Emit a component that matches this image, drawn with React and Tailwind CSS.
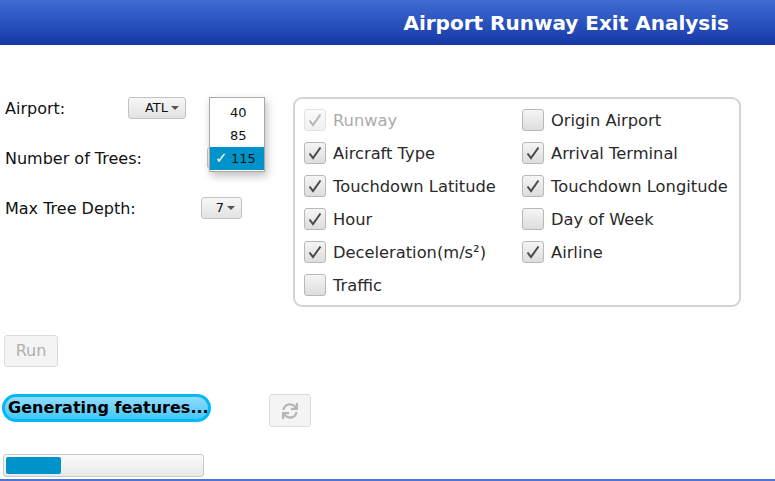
import { FaSync } from 'react-icons/fa';

const font = "font-['DejaVu_Sans',sans-serif]";

function Combo({ value, className }) {
  return (
    <div
      className={`flex h-[22px] items-center justify-end gap-[3px] rounded-[3px] border border-[#c2c2c2] bg-gradient-to-b from-[#f7f7f7] to-[#e2e2e2] pr-[6px] text-[13px] text-[#111] ${className}`}
    >
      {value && <span>{value}</span>}
      <svg width="8" height="5" viewBox="0 0 8 5">
        <path d="M0 0 L8 0 L4 4 Z" fill="#555" />
      </svg>
    </div>
  );
}

function Check({ label, checked, disabled }) {
  return (
    <div className={`flex h-[22px] items-center gap-[7px] ${disabled ? 'opacity-40' : ''}`}>
      <div className="flex h-[22px] w-[22px] shrink-0 items-center justify-center rounded-[3px] border border-[#b8b8b8] bg-gradient-to-b from-[#f5f5f5] to-[#dddddd]">
        {checked && (
          <svg width="16" height="16" viewBox="0 0 16 16">
            <path d="M2.5 8.5 L6 13 L13.5 2.5" fill="none" stroke="#4a4a4a" strokeWidth="2" />
          </svg>
        )}
      </div>
      <span className="relative top-[1px] whitespace-nowrap text-[16.3px] text-[#2a2a2a]">{label}</span>
    </div>
  );
}

export default function App() {
  return (
    <div className={`flex h-[481px] w-[775px] flex-col overflow-hidden bg-white ${font}`}>
      <div className="flex h-[45px] shrink-0 items-center justify-end bg-gradient-to-b from-[#416cd4] to-[#1538a6] pr-[46px]">
        <h1 className="text-[20px] font-bold text-white">Airport Runway Exit Analysis</h1>
      </div>

      <div className="mt-[52px] flex items-start">
        <div className="relative flex w-[293px] flex-col gap-[28px] text-[16px] text-[#111]">
          <div className="flex h-[22px] items-center">
            <span className="relative top-[1px] w-[128px] pl-[5px]">Airport:</span>
            <Combo value="ATL" className="w-[58px]" />
          </div>
          <div className="flex h-[22px] items-center">
            <span className="relative top-[1px] w-[207px] pl-[5px]">Number of Trees:</span>
            <Combo className="w-[56px] border-[#0093c9]" />
          </div>
          <div className="flex h-[22px] items-center">
            <span className="relative top-[1px] w-[201px] pl-[5px]">Max Tree Depth:</span>
            <Combo value="7" className="w-[41px]" />
          </div>

          <div className="absolute left-[209px] top-0 flex h-[75px] w-[56px] flex-col border border-[#a9a9a9] bg-white pt-[3px] text-[13px] shadow-[2px_4px_8px_rgba(0,0,0,0.25)]">
            <div className="flex h-[23px] items-center pl-[20px]">40</div>
            <div className="flex h-[23px] items-center pl-[20px]">85</div>
            <div className="flex h-[23px] items-center bg-[#0093c9] pl-[5px] text-[#111]">
              <span className="w-[16px] text-[15px] text-white">✓</span>
              <span>115</span>
            </div>
          </div>
        </div>

        <div className="w-[448px] rounded-[9px] border-2 border-[#d4d4d4] pb-[9px] pl-[9px] pt-[10px]">
          <div className="grid grid-cols-[218px_1fr] gap-y-[11px]">
            <Check label="Runway" checked disabled />
            <Check label="Origin Airport" />
            <Check label="Aircraft Type" checked />
            <Check label="Arrival Terminal" checked />
            <Check label="Touchdown Latitude" checked />
            <Check label="Touchdown Longitude" checked />
            <Check label="Hour" checked />
            <Check label="Day of Week" />
            <Check label="Deceleration(m/s²)" checked />
            <Check label="Airline" checked />
            <Check label="Traffic" />
          </div>
        </div>
      </div>

      <div className="ml-[4px] mt-[28px] flex h-[32px] w-[54px] items-center justify-center rounded-[3px] border border-[#dcdcdc] bg-[#f4f4f4] text-[16px] text-[#b0b0b0]">
        Run
      </div>

      <div className="mt-[27px] flex items-start">
        <div className="ml-[2px] flex h-[28px] w-[209px] items-center whitespace-nowrap rounded-full border-[3px] border-[#00b9f5] bg-gradient-to-b from-[#8fdcfb] to-[#3cc8fb] pl-[3px] text-[16px] font-bold text-black">
          Generating features...
        </div>
        <div className="ml-[58px] flex h-[33px] w-[42px] items-center justify-center rounded-[3px] border border-[#dcdcdc] bg-[#f4f4f4]">
          <FaSync className="text-[16px] text-[#b5b5b5]" />
        </div>
      </div>

      <div className="ml-[3px] mt-[27px] flex h-[23px] w-[201px] items-center rounded-[3px] border border-[#c8c8c8] bg-gradient-to-b from-[#fafafa] to-[#e8e8e8] px-[2px]">
        <div className="h-[17px] w-[55px] rounded-[2px] bg-[#0093c9]" />
      </div>

      <div className="mt-auto h-[2px] shrink-0 bg-[#4a74d8]" />
    </div>
  );
}
